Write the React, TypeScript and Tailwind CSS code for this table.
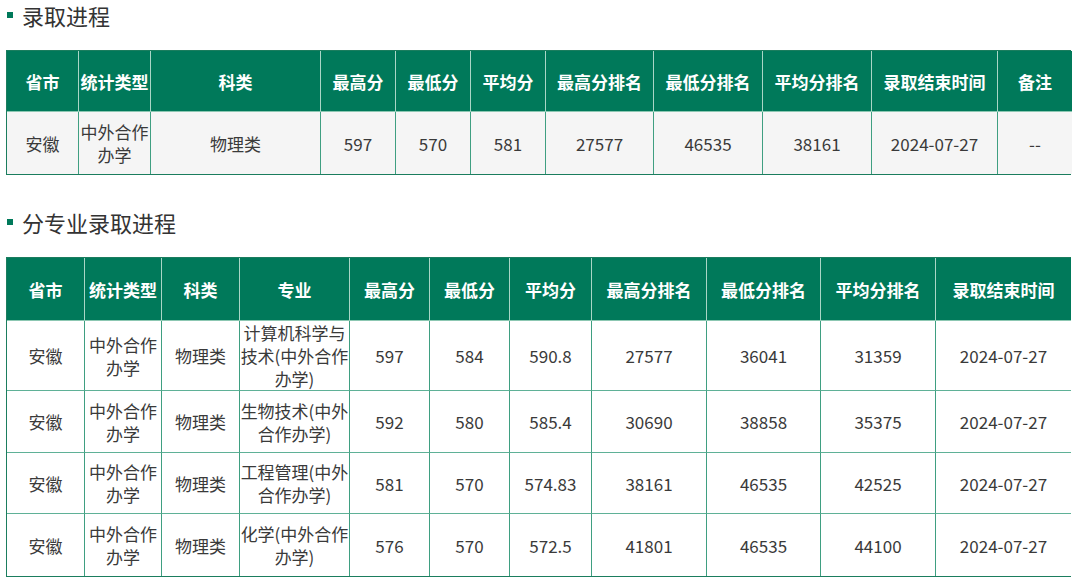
import React from "react";

const FONT = { fontFamily: '"Noto Sans CJK SC", "Noto Sans", sans-serif' };

function Title({ text }: { text: string }) {
  return (
    <div className="flex items-center h-[28px] pl-[7px]">
      <span className="w-[6px] h-[6px] bg-[#00795a] mr-[9px]" />
      <span className="text-[22px] text-[#333333] leading-[28px]">{text}</span>
    </div>
  );
}

type Cell = React.ReactNode;

function Table({
  widths,
  head,
  rows,
  headH,
  rowHs,
  bodyBg,
}: {
  widths: number[];
  head: string[];
  rows: Cell[][];
  headH: number;
  rowHs: number[];
  bodyBg: string;
}) {
  return (
    <div className="ml-[6px] w-[1065px] border border-[#1b7d5e]">
      <table className="table-fixed border-separate border-spacing-0 w-full">
        <colgroup>
          {widths.map((w, i) => (
            <col key={i} style={{ width: w }} />
          ))}
        </colgroup>
        <thead>
          <tr style={{ height: headH }}>
            {head.map((h, i) => (
              <th
                key={i}
                className={`bg-[#00795a] text-white font-bold text-[17px] leading-[23px] text-center whitespace-nowrap p-0 border-b border-b-[#8cc7b2] ${
                  i < head.length - 1 ? "border-r border-r-[#a9d6c6]" : ""
                }`}
              >
                {h}
              </th>
            ))}
          </tr>
        </thead>
        <tbody>
          {rows.map((r, ri) => (
            <tr key={ri} style={{ height: rowHs[ri] }}>
              {r.map((c, ci) => (
                <td
                  key={ci}
                  className={`${bodyBg} text-[#3a3a3a] text-[17px] leading-[23px] text-center whitespace-nowrap p-0 ${
                    ci < r.length - 1 ? "border-r border-r-[#3f9f81]" : ""
                  } ${ri < rows.length - 1 ? "border-b border-b-[#5fb197]" : ""}`}
                >
                  {c}
                </td>
              ))}
            </tr>
          ))}
        </tbody>
      </table>
    </div>
  );
}

const coop = (
  <>
    中外合作
    <br />
    办学
  </>
);

export default function App() {
  const rows2: Cell[][] = [
    [
      "安徽",
      coop,
      "物理类",
      <>
        计算机科学与
        <br />
        技术(中外合作
        <br />
        办学)
      </>,
      "597",
      "584",
      "590.8",
      "27577",
      "36041",
      "31359",
      "2024-07-27",
    ],
    [
      "安徽",
      coop,
      "物理类",
      <>
        生物技术(中外
        <br />
        合作办学)
      </>,
      "592",
      "580",
      "585.4",
      "30690",
      "38858",
      "35375",
      "2024-07-27",
    ],
    [
      "安徽",
      coop,
      "物理类",
      <>
        工程管理(中外
        <br />
        合作办学)
      </>,
      "581",
      "570",
      "574.83",
      "38161",
      "46535",
      "42525",
      "2024-07-27",
    ],
    [
      "安徽",
      coop,
      "物理类",
      <>
        化学(中外合作
        <br />
        办学)
      </>,
      "576",
      "570",
      "572.5",
      "41801",
      "46535",
      "44100",
      "2024-07-27",
    ],
  ];

  return (
    <div className="w-[1080px] h-[586px] bg-white overflow-hidden pt-[1px]" style={FONT}>
      <Title text="录取进程" />
      <div className="mt-[21px]">
        <Table
          widths={[72, 72, 170, 75, 75, 75, 108, 109, 109, 126, 74]}
          head={[
            "省市",
            "统计类型",
            "科类",
            "最高分",
            "最低分",
            "平均分",
            "最高分排名",
            "最低分排名",
            "平均分排名",
            "录取结束时间",
            "备注",
          ]}
          rows={[
            [
              "安徽",
              coop,
              "物理类",
              "597",
              "570",
              "581",
              "27577",
              "46535",
              "38161",
              "2024-07-27",
              "--",
            ],
          ]}
          headH={61}
          rowHs={[62]}
          bodyBg="bg-[#f5f5f5]"
        />
      </div>
      <div className="mt-[33px]">
        <Title text="分专业录取进程" />
      </div>
      <div className="mt-[21px]">
        <Table
          widths={[78, 77, 78, 110, 80, 80, 82, 115, 114, 115, 135]}
          head={[
            "省市",
            "统计类型",
            "科类",
            "专业",
            "最高分",
            "最低分",
            "平均分",
            "最高分排名",
            "最低分排名",
            "平均分排名",
            "录取结束时间",
          ]}
          rows={rows2}
          headH={63}
          rowHs={[68, 62, 61, 62]}
          bodyBg="bg-white"
        />
      </div>
    </div>
  );
}
